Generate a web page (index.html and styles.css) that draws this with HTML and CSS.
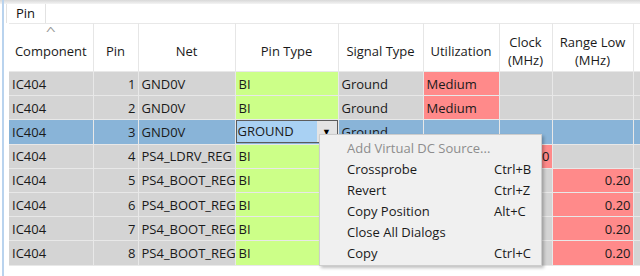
FILE: index.html
```html
<!DOCTYPE html>
<html>
<head>
<meta charset="utf-8">
<link rel="stylesheet" href="styles.css">
</head>
<body>
<div class="app">
  <div class="topshade"></div>
  <div class="tabbar"><div class="tab">Pin</div></div>
  <div class="gridwrap">
    <table class="grid">
      <colgroup>
        <col class="c1"><col class="c2"><col class="c3"><col class="c4"><col class="c5"><col class="c6"><col class="c7"><col class="c8"><col class="c9">
      </colgroup>
      <thead>
        <tr>
          <th class="sorted"><span class="caret">^</span>Component</th>
          <th>Pin</th>
          <th>Net</th>
          <th>Pin Type</th>
          <th>Signal Type</th>
          <th>Utilization</th>
          <th>Clock<br>(MHz)</th>
          <th>Range Low<br>(MHz)</th>
          <th></th>
        </tr>
      </thead>
      <tbody>
        <tr><td>IC404</td><td class="num">1</td><td>GND0V</td><td class="green">BI</td><td>Ground</td><td class="red">Medium</td><td></td><td></td><td></td></tr>
        <tr><td>IC404</td><td class="num">2</td><td>GND0V</td><td class="green">BI</td><td>Ground</td><td class="red">Medium</td><td></td><td></td><td></td></tr>
        <tr class="sel"><td>IC404</td><td class="num">3</td><td>GND0V</td><td class="edit"><div class="editor"><span class="edtext">GROUND</span><span class="drop">&#9660;</span></div></td><td>Ground</td><td></td><td></td><td></td><td></td></tr>
        <tr><td>IC404</td><td class="num">4</td><td>PS4_LDRV_REG</td><td class="green">BI</td><td></td><td></td><td class="red num">0.20</td><td></td><td></td></tr>
        <tr><td>IC404</td><td class="num">5</td><td>PS4_BOOT_REG</td><td class="green">BI</td><td></td><td></td><td></td><td class="red num">0.20</td><td></td></tr>
        <tr><td>IC404</td><td class="num">6</td><td>PS4_BOOT_REG</td><td class="green">BI</td><td></td><td></td><td></td><td class="red num">0.20</td><td></td></tr>
        <tr><td>IC404</td><td class="num">7</td><td>PS4_BOOT_REG</td><td class="green">BI</td><td></td><td></td><td></td><td class="red num">0.20</td><td></td></tr>
        <tr><td>IC404</td><td class="num">8</td><td>PS4_BOOT_REG</td><td class="green">BI</td><td></td><td></td><td></td><td class="red num">0.20</td><td></td></tr>
      </tbody>
    </table>
    <div class="menu">
      <div class="item disabled"><span>Add Virtual DC Source...</span></div>
      <div class="item"><span>Crossprobe</span><span class="key">Ctrl+B</span></div>
      <div class="item"><span>Revert</span><span class="key">Ctrl+Z</span></div>
      <div class="item"><span>Copy Position</span><span class="key">Alt+C</span></div>
      <div class="item"><span>Close All Dialogs</span></div>
      <div class="item"><span>Copy</span><span class="key">Ctrl+C</span></div>
    </div>
  </div>
</div>
</body>
</html>
```
FILE: styles.css
```css
html, body { margin: 0; padding: 0; background: #fff; }
body { font-family: "Open Sans", "Noto Sans", sans-serif; font-size: 13px; color: #1a1a1a; }
.app {
  width: 640px; height: 276px; overflow: hidden; position: relative;
  background: #fff;
}
.app::before {
  content: ""; position: absolute; left: 2px; top: 0; bottom: 0; width: 2px; background: #b9d3ee;
}
.topshade { height: 4px; background: linear-gradient(#d8d8d8, #f4f4f4); }
.tabbar { height: 19px; display: flex; padding-left: 6px; background: #fff; }
.tab {
  width: 40px; height: 19px; box-sizing: border-box;
  border: 1px solid #e2e2e2; border-bottom: none; border-top: none;
  padding-left: 9px; line-height: 19px; font-size: 13px; color: #111;
}
.gridwrap { position: relative; padding-left: 9px; }
.grid {
  border-collapse: collapse; table-layout: fixed; width: 720px;
}
.c1 { width: 84px; } .c2 { width: 45px; } .c3 { width: 97px; } .c4 { width: 103px; }
.c5 { width: 85px; } .c6 { width: 76px; } .c7 { width: 53px; } .c8 { width: 81px; } .c9 { width: 96px; }
thead tr { height: 48px; }
th {
  padding: 6px 0 0; font-weight: normal; text-align: center; vertical-align: middle;
  border-top: 1px solid #e8e8e8; border-bottom: 1px solid #e8e8e8; border-right: 1px solid #e6e6e6;
  line-height: 18px; background: #fff; color: #1a1a1a; position: relative;
}
.caret {
  position: absolute; left: 0; right: 0; top: 2px; font-size: 11px; line-height: 10px; color: #999;
  transform: scaleX(1.6);
}
td {
  padding: 0 3px; white-space: nowrap; overflow: hidden;
  background: #d4d4d4; border-right: 1px solid #e8e8e8; border-bottom: 1px solid #e8e8e8;
  line-height: 20px; vertical-align: middle;
}
tbody tr { height: 24.2px; }
td.num { text-align: right; padding-right: 2px; }
td.green { background: #ccff88; }
td.red { background: #ff8a8a; }
tr.sel td { background: #89b4d8; }
td.edit { padding: 0; background: #89b4d8; }
.editor {
  display: flex; height: 23px; box-sizing: border-box; border: 1px solid #5c5c5c;
}
.edtext { flex: 1; background: #a9d1f3; padding-left: 1px; line-height: 21px; }
.drop {
  width: 20px; background: #e4e4e4; font-size: 9px; text-align: center; line-height: 21px; color: #000;
}
.menu {
  position: absolute; left: 319px; top: 111px; width: 223px; height: 132px; box-sizing: border-box;
  background: #f0f0f0; border: 1px solid #cdcdcd; padding: 3px 0 1px;
  box-shadow: 2px 2px 3px rgba(0,0,0,0.25);
}
.item { display: flex; height: 21px; line-height: 21px; padding-left: 27px; color: #1a1a1a; }
.item > span:first-child { width: 147px; }
.item.disabled { color: #8d8d8d; }
```
